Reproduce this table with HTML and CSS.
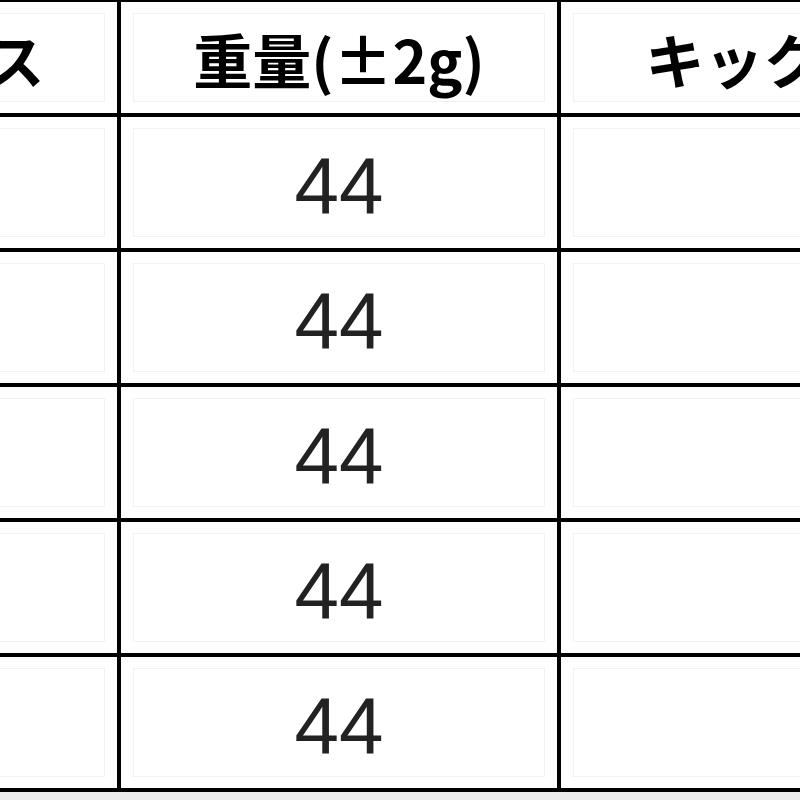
FILE: index.html
```html
<!DOCTYPE html>
<html lang="ja">
<head>
<meta charset="utf-8">
<title>シャフトスペック</title>
<link rel="stylesheet" href="styles.css">
</head>
<body>
<div class="spec">
  <div class="cell head"><div class="inner">フレックス</div></div>
  <div class="cell head"><div class="inner">重量(±2g)</div></div>
  <div class="cell head"><div class="inner">キックポイント</div></div>

  <div class="cell"><div class="inner"></div></div>
  <div class="cell"><div class="inner num">44</div></div>
  <div class="cell"><div class="inner"></div></div>

  <div class="cell"><div class="inner"></div></div>
  <div class="cell"><div class="inner num">44</div></div>
  <div class="cell"><div class="inner"></div></div>

  <div class="cell"><div class="inner"></div></div>
  <div class="cell"><div class="inner num">44</div></div>
  <div class="cell"><div class="inner"></div></div>

  <div class="cell"><div class="inner"></div></div>
  <div class="cell"><div class="inner num">44</div></div>
  <div class="cell"><div class="inner"></div></div>

  <div class="cell"><div class="inner"></div></div>
  <div class="cell"><div class="inner num">44</div></div>
  <div class="cell"><div class="inner"></div></div>
</div>
</body>
</html>
```

FILE: styles.css
```css
html, body {
  margin: 0;
  padding: 0;
  overflow: hidden;
  background: #ececec;
}

body {
  width: 800px;
  height: 800px;
}

.spec {
  display: grid;
  grid-template-columns: 438px 436px 582px;
  grid-template-rows: 111px repeat(5, 131px);
  gap: 4px;
  padding: 4px;
  background: #000;
  width: max-content;
  margin: -2px 0 0 -325px;
}

.cell {
  background: #fff;
  padding: 11px 12px;
  display: flex;
}

.inner {
  flex: 1;
  border: 1px solid #f2f2f2;
  display: flex;
  align-items: center;
  justify-content: center;
  white-space: nowrap;
  color: #111;
}

.head .inner {
  font-family: "Noto Sans CJK JP", "Noto Sans", sans-serif;
  font-weight: 700;
  font-size: 59px;
  line-height: 1;
  padding-top: 2px;
  color: #000;
}

.num {
  font-family: "Liberation Sans", Arial, sans-serif;
  font-weight: 400;
  font-size: 80px;
  line-height: 1;
  padding-top: 6px;
  color: #222;
}
```
